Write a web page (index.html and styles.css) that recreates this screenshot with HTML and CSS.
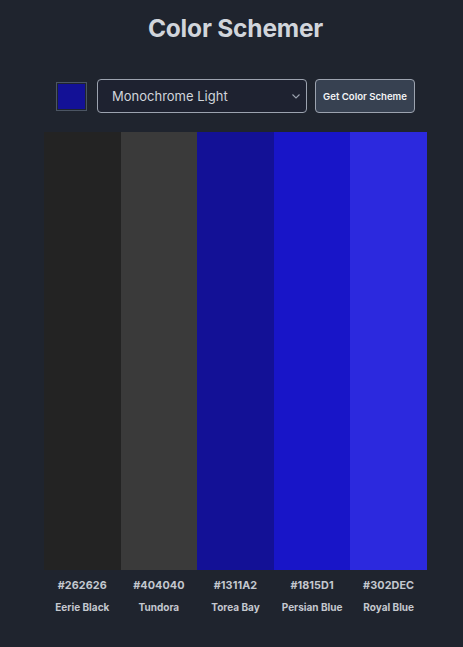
FILE: index.html
```html
<!DOCTYPE html>
<html lang="en">
<head>
<meta charset="utf-8">
<title>Color Schemer</title>
<link rel="stylesheet" href="styles.css">
</head>
<body>
<main class="app">
  <h1 class="title">Color Schemer</h1>
  <div class="controls">
    <div class="seed"><span class="seed-swatch"></span></div>
    <div class="select">
      <span class="select-text">Monochrome Light</span>
      <svg class="chev" width="8" height="5" viewBox="0 0 8 5"><path d="M0.5 0.5 L4 4 L7.5 0.5" fill="none" stroke="#9ca3af" stroke-width="1.1"/></svg>
    </div>
    <button class="btn">Get Color Scheme</button>
  </div>
  <div class="palette">
    <div class="col"><div class="swatch" style="background:#232323"></div><p class="hex">#262626</p><p class="name">Eerie Black</p></div>
    <div class="col"><div class="swatch" style="background:#3a3a3a"></div><p class="hex">#404040</p><p class="name">Tundora</p></div>
    <div class="col"><div class="swatch" style="background:#131196"></div><p class="hex">#1311A2</p><p class="name">Torea Bay</p></div>
    <div class="col"><div class="swatch" style="background:#1815c8"></div><p class="hex">#1815D1</p><p class="name">Persian Blue</p></div>
    <div class="col"><div class="swatch" style="background:#2c29de"></div><p class="hex">#302DEC</p><p class="name">Royal Blue</p></div>
  </div>
</main>
</body>
</html>
```
FILE: styles.css
```css
html, body {
  margin: 0;
  padding: 0;
  background: #1f242e;
}
body {
  font-family: Inter, "Noto Sans", sans-serif;
  color: #d1d5db;
  width: 463px;
  height: 647px;
  overflow: hidden;
}
.app {
  display: flex;
  flex-direction: column;
  align-items: center;
  padding-left: 8px;
}
.title {
  margin: 12px 0 0;
  font-size: 24.5px;
  line-height: 32px;
  font-weight: 700;
  color: #d1d5db;
  letter-spacing: -0.2px;
}
.controls {
  display: flex;
  align-items: center;
  margin-top: 35px;
  height: 34px;
}
.seed {
  width: 31px;
  height: 29px;
  box-sizing: border-box;
  border: 1px solid #4b5563;
  padding: 1px;
  display: flex;
}
.seed-swatch {
  flex: 1;
  background: #131196;
}
.select {
  margin-left: 10px;
  width: 210px;
  height: 34px;
  box-sizing: border-box;
  border: 1px solid #9ca3af;
  border-radius: 4px;
  background: #1e2230;
  display: flex;
  align-items: center;
  justify-content: space-between;
  padding: 0 6px 0 14px;
}
.select-text {
  font-size: 13px;
  color: #d1d5db;
}
.chev { margin-top: 1px; }
.btn {
  margin-left: 8px;
  width: 100px;
  height: 34px;
  box-sizing: border-box;
  border: 1px solid #9ca3af;
  border-radius: 4px;
  background: #374151;
  color: #f3f4f6;
  font-family: Inter, "Noto Sans", sans-serif;
  font-size: 9.6px;
  font-weight: 600;
  padding: 0;
}
.palette {
  display: flex;
  margin-top: 19px;
  width: 383px;
}
.col {
  flex: 1;
  display: flex;
  flex-direction: column;
  align-items: center;
}
.swatch {
  width: 100%;
  height: 438px;
}
.hex, .name {
  margin: 0;
  font-weight: 700;
  color: #c4c8cf;
}
.hex { margin-top: 10px; line-height: 12px; font-size: 10.8px; letter-spacing: 0.1px; }
.name { margin-top: 9px; line-height: 12px; font-size: 10px; }
```
